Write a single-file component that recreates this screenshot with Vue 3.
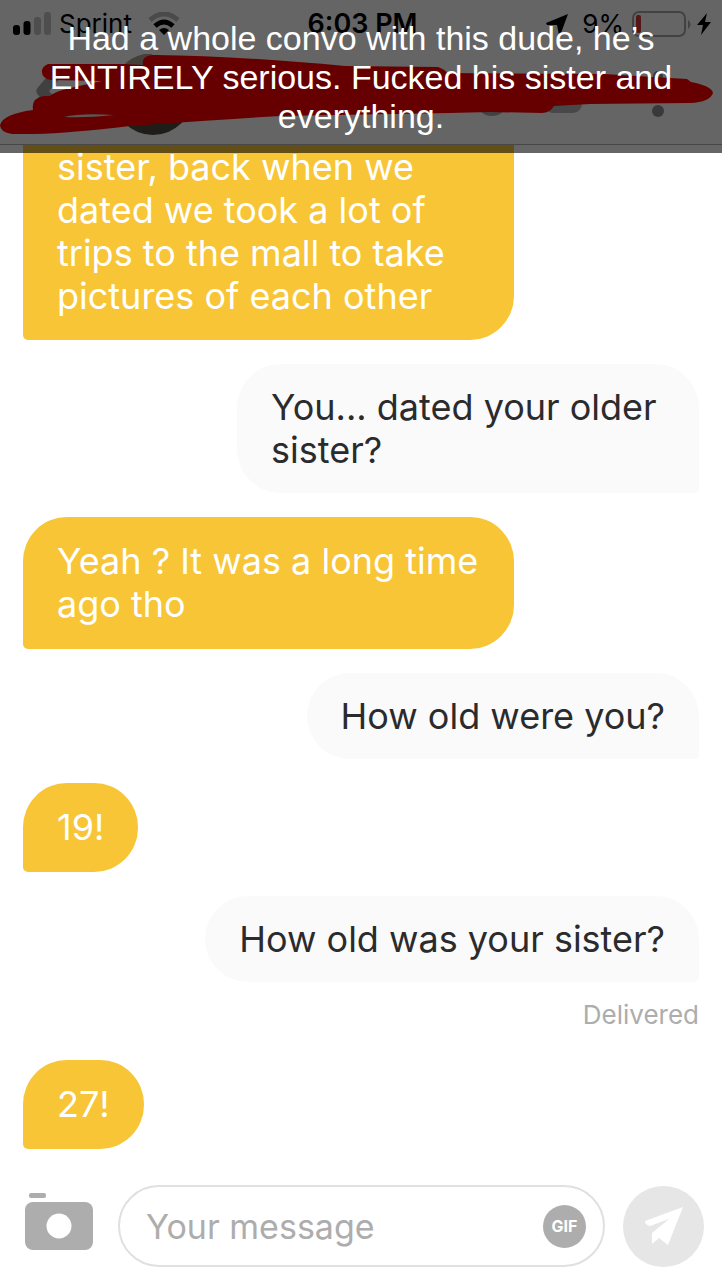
<script setup>
import { ref } from 'vue'

const draft = ref('')
const messages = [
  { from: 'them', text: 'sister, back when we dated we took a lot of trips to the mall to take pictures of each other', kind: 'cut' },
  { from: 'me', text: 'You... dated your older sister?', kind: 'narrow' },
  { from: 'them', text: 'Yeah ? It was a long time ago tho' },
  { from: 'me', text: 'How old were you?' },
  { from: 'them', text: '19!' },
  { from: 'me', text: 'How old was your sister?', status: 'Delivered' },
  { from: 'them', text: '27!' },
]
</script>

<template>
  <div class="page">
    <header class="top">
      <div class="status">
        <div class="side">
          <svg width="38" height="24" viewBox="0 0 38 24" aria-hidden="true">
            <rect x="0" y="13" width="7" height="10" rx="3" />
            <rect x="10.500" y="9" width="7" height="14" rx="3" />
            <rect x="21" y="5" width="7" height="18" rx="3" fill="#c4c4c4" />
            <rect x="31" y="0" width="7" height="23" rx="3" fill="#c4c4c4" />
          </svg>
          <span>Sprint</span>
          <svg class="wifi" width="32" height="24" viewBox="0 0 32 24" fill="none" aria-hidden="true">
            <path d="M2 8Q16-4 30 8" stroke="#b8b8b8" stroke-width="5" />
            <path d="M7 14Q16 6 25 14" stroke="#000" stroke-width="5" />
            <path d="M11 18Q16 14 21 18L16 23Z" fill="#000" />
          </svg>
        </div>
        <strong>6:03 PM</strong>
        <div class="side end">
          <svg width="22" height="22" viewBox="0 0 22 22" aria-hidden="true"><path d="M22 1L0 10L1 12L11 12L13 22L15 20Z" /></svg>
          <span>9%</span>
          <svg width="60" height="27" viewBox="0 0 60 27" aria-hidden="true">
            <rect x="1" y="1" width="52" height="24" rx="6" fill="none" stroke="#a5a5a5" stroke-width="2" />
            <rect x="4" y="4" width="5" height="18" rx="2" fill="#d33a3f" />
            <path d="M56 9Q61 13 56 18Z" fill="#a5a5a5" />
          </svg>
          <svg class="bolt" width="15" height="22" viewBox="0 0 15 22" aria-hidden="true"><path d="M10 0L0 12H6L4 22L14 9H8Z" /></svg>
        </div>
      </div>
      <svg class="scribble" viewBox="0 0 722 153" preserveAspectRatio="none" aria-hidden="true">
        <path d="M54 77L42 91L50 101" fill="none" stroke="#a0a0a3" stroke-width="11" stroke-linecap="round" stroke-linejoin="round" />
        <circle cx="153" cy="95" r="40" fill="#4e4a40" />
        <path d="M122 67Q130 57 144 54H152V70Z" fill="#aaa493" />
        <ellipse cx="492" cy="108" rx="12" ry="8" fill="#a5a5a5" />
        <rect x="544" y="74" width="38" height="39" rx="9" fill="#b5b5b5" />
        <g fill="#8e8e93"><circle cx="658" cy="76" r="5" /><circle cx="658" cy="111" r="6" /></g>
        <path fill="#ff0000" d="M48 64H125L143 65Q141 55 155 55Q240 56 345 66L438 67Q446 70 447 73L604 74L687 79L691 82Q712 86 713 93Q710 102 690 103L590 104L554 106Q550 113 542 113L490 112L450 113L280 116Q210 120 130 126Q70 133 35 134H12Q0 132 0 125Q3 114 33 110Q31 98 44 96L50 96Q56 91 70 88L102 81L51 80Q41 78 42 70Q43 66 48 64Z" />
        <path d="M64 117Q80 113 114 115Q86 118 64 117Z" fill="#dedbd2" />
      </svg>
      <p class="caption">Had a whole convo with this dude, he’s ENTIRELY serious. Fucked his sister and everything.</p>
    </header>

    <main class="chat">
      <div v-for="m in messages" :key="m.text" class="row" :class="m.from">
        <p class="bubble" :class="m.kind">{{ m.text }}</p>
        <small v-if="m.status">{{ m.status }}</small>
      </div>
    </main>

    <form class="composer" @submit.prevent>
      <button type="button" class="camera" aria-label="Camera">
        <svg width="68" height="58" viewBox="0 0 68 58" aria-hidden="true">
          <rect x="4" y="0" width="17" height="5" rx="2" fill="#adadad" />
          <rect x="0" y="9" width="68" height="48" rx="8" fill="#adadad" />
          <circle cx="34" cy="33" r="12.500" fill="#fff" />
        </svg>
      </button>
      <div class="field">
        <input v-model="draft" type="text" placeholder="Your message" aria-label="Your message" />
        <button type="button" class="gif">GIF</button>
      </div>
      <button type="submit" class="send" aria-label="Send">
        <svg width="38" height="38" viewBox="0 0 38 38" aria-hidden="true">
          <path fill="#fff" d="M38 0L0 14Q0 18 5 19L24 12L7 26V37L14 31L23 38Z" />
        </svg>
      </button>
    </form>
  </div>
</template>

<style>
body { margin: 0; background: #fff; }
</style>

<style scoped>
* { box-sizing: border-box; }
.page {
  min-height: 100vh;
  display: flex;
  flex-direction: column;
  font-family: Inter, "Liberation Sans", sans-serif;
  color: #2b2b2d;
}
.top {
  position: relative;
  height: 145px;
  background: #fdfdfd;
  border-bottom: 1px solid #b2b2b2;
}
.status {
  display: grid;
  grid-template-columns: 1fr auto 1fr;
  align-items: center;
  height: 48px;
  padding: 0 10px 0 13px;
  font-size: 26px;
  line-height: 28px;
  color: #000;
}
.status strong { font-size: 27px; font-weight: 600; }
.side { display: flex; align-items: center; gap: 8px; }
.wifi { margin-left: 8px; }
.end { justify-content: flex-end; }
.end span { margin-left: 6px; }
.bolt { margin-left: -3px; }
.scribble { position: absolute; top: 0; left: 0; width: 100%; height: 153px; }
.caption {
  position: absolute;
  inset: 0 0 auto;
  z-index: 1;
  height: 153px;
  margin: 0;
  padding: 19px 44px 0;
  background: rgba(0, 0, 0, 0.6);
  color: #fff;
  font: 34px/39px "Liberation Sans", sans-serif;
  text-align: center;
}
.chat {
  flex: 1;
  display: flex;
  flex-direction: column;
  gap: 24px;
  padding: 0 23px;
}
.row { display: flex; flex-direction: column; align-items: flex-start; }
.row.me { align-items: flex-end; }
.bubble {
  max-width: 491px;
  margin: 0;
  padding: 23px 34px;
  border-radius: 44px 44px 44px 5px;
  background: #f7c536;
  color: #fff;
  font-size: 36px;
  line-height: 43px;
}
.me .bubble {
  max-width: 500px;
  padding: 22px 34px 21px;
  border-radius: 44px 44px 5px 44px;
  background: #fafafa;
  color: #2b2b2d;
}
.bubble.cut { padding: 1px 34px 22px; border-radius: 0 0 44px 5px; }
.me .bubble.narrow { max-width: 462px; }
small {
  margin: 17px 0 5px;
  font-size: 26px;
  line-height: 32px;
  color: #adadad;
}
.composer {
  display: flex;
  align-items: center;
  gap: 18px;
  padding: 36px 18px 13px 25px;
}
button { padding: 0; border: 0; background: none; font-family: inherit; }
button svg { display: block; }
.camera { margin: 0 7px 8px 0; }
.field {
  flex: 1;
  min-width: 0;
  display: flex;
  align-items: center;
  height: 82px;
  padding: 0 17px 0 26px;
  border: 2px solid #e0e0e0;
  border-radius: 41px;
}
input {
  flex: 1;
  min-width: 0;
  padding: 0;
  border: 0;
  outline: 0;
  background: none;
  font-family: inherit;
  font-size: 34px;
  line-height: 43px;
}
input::placeholder { color: #adadad; opacity: 1; }
.gif {
  width: 43px;
  height: 43px;
  border-radius: 50%;
  background: #adadad;
  color: #fff;
  font-size: 16px;
  font-weight: 700;
}
.send {
  display: grid;
  place-items: center;
  width: 81px;
  height: 81px;
  border-radius: 50%;
  background: #e6e6e6;
}
</style>
